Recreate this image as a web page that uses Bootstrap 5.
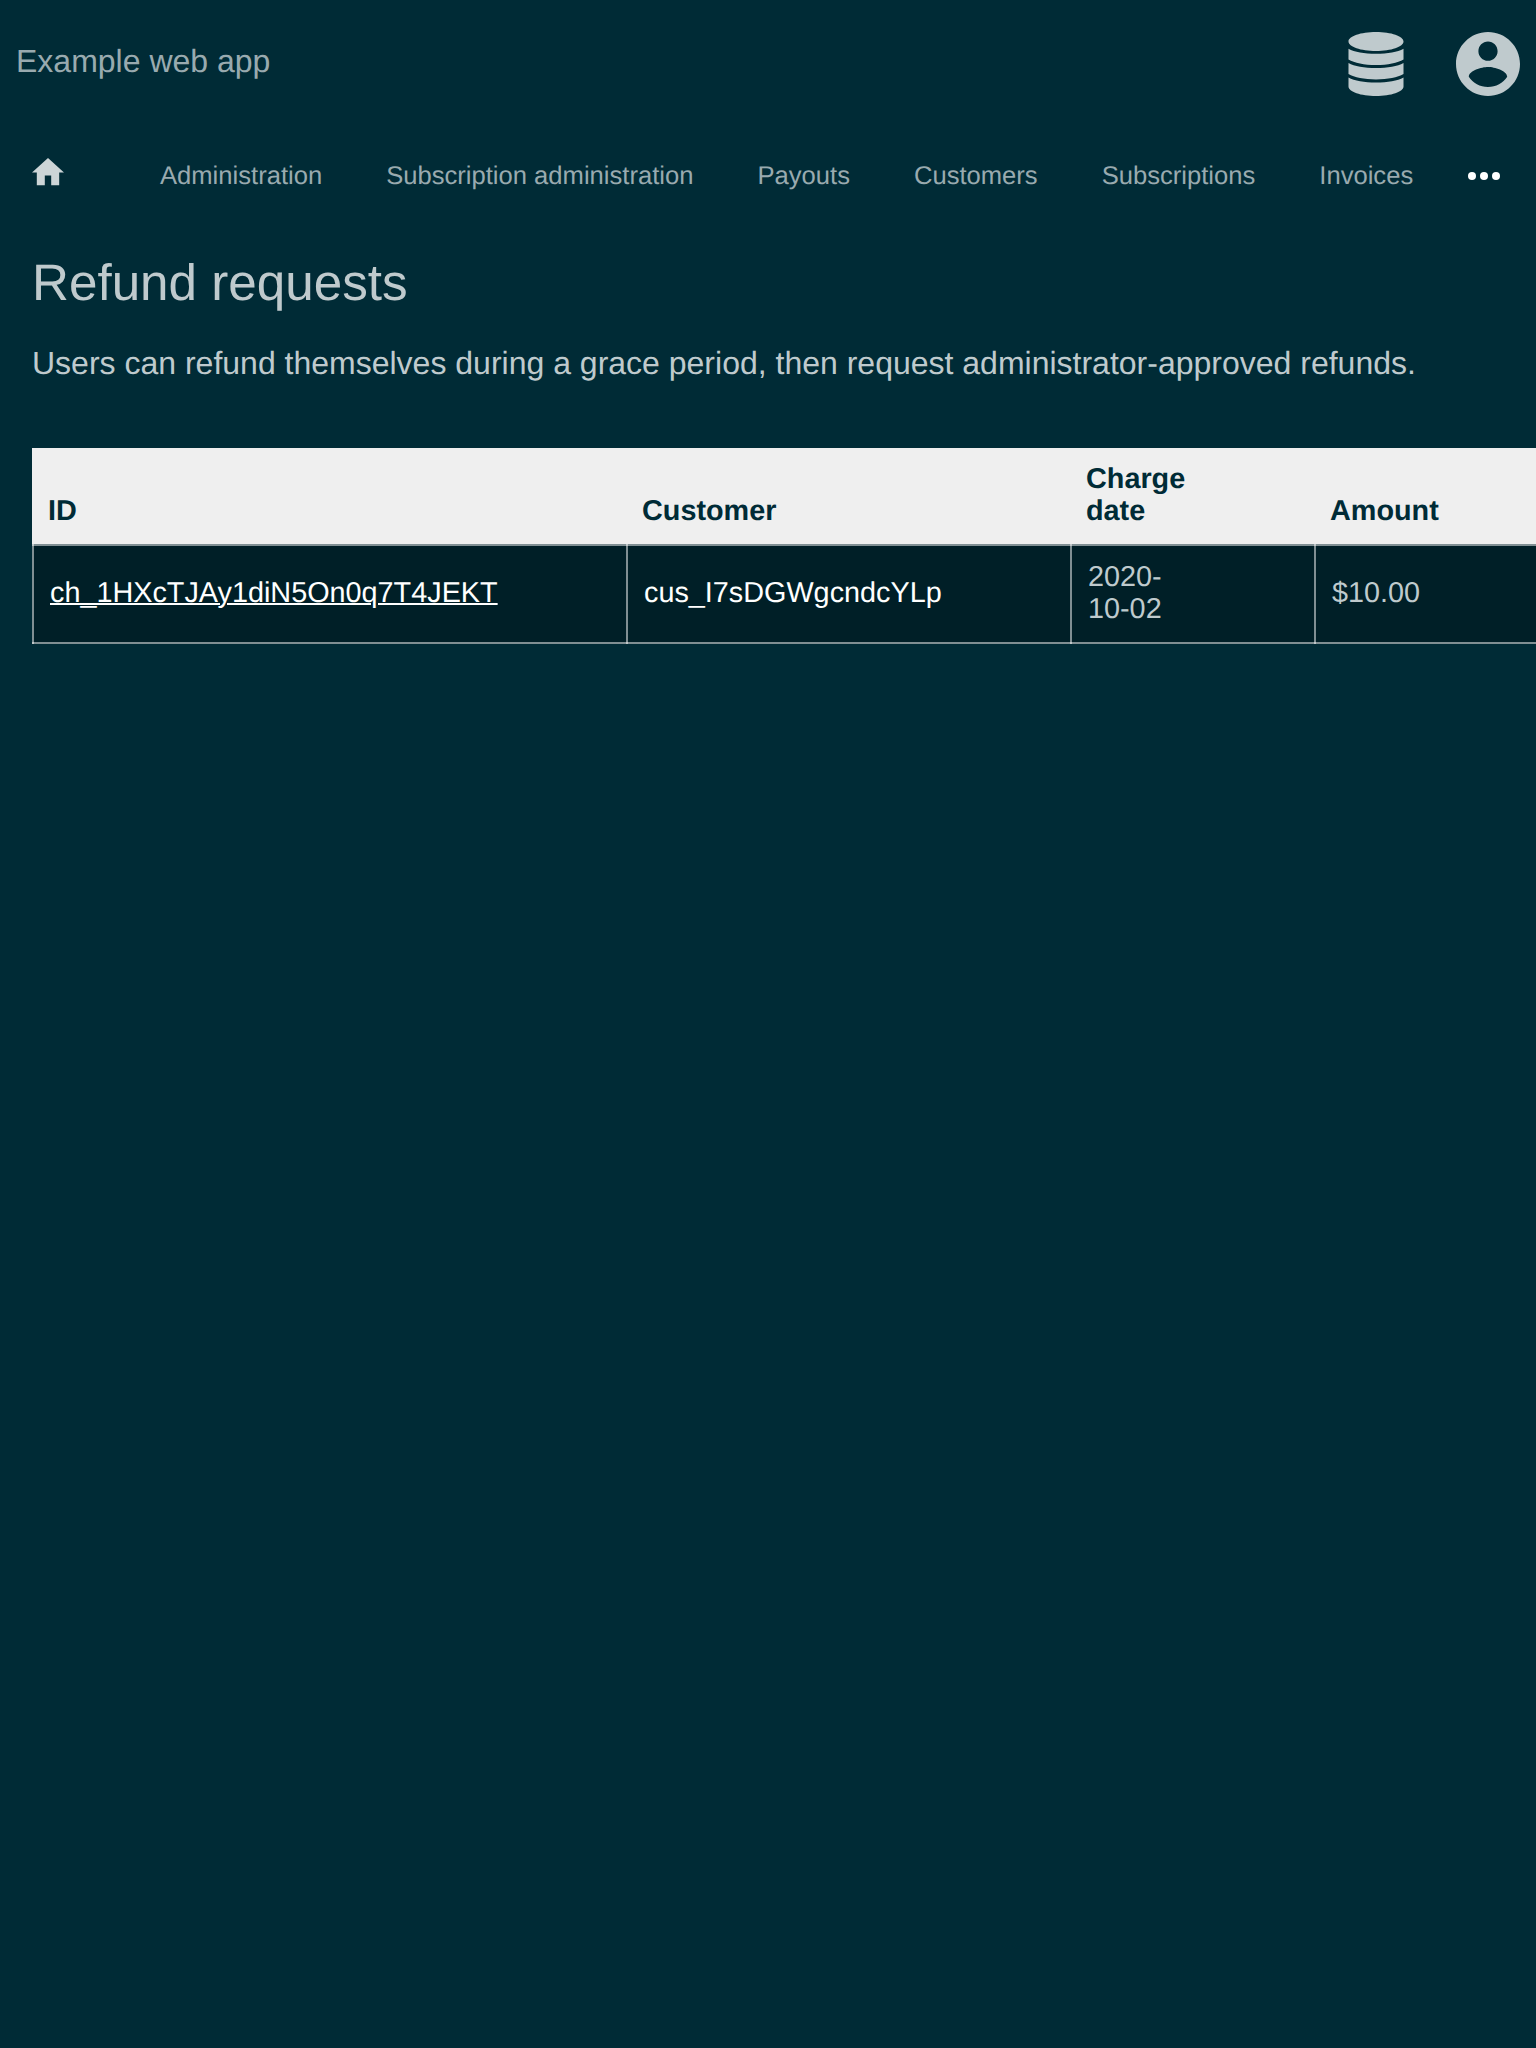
<!DOCTYPE html>
<html lang="en">
<head>
<meta charset="utf-8">
<title>Refund requests</title>
<link href="https://cdn.jsdelivr.net/npm/bootstrap@5.3.0/dist/css/bootstrap.min.css" rel="stylesheet">
<style>
body { background: #002b36; color: #bfcacd; font-family: "Liberation Sans", Arial, sans-serif; font-size: 32px; line-height: 36px; overflow: hidden; min-height: 100vh; text-rendering: geometricPrecision; }
.app-header { height: 128px; padding: 0 16px; }
.app-title { font-size: 32px; color: #99aaaf; margin: 43px 0 0; line-height: 36px; }
.header-icons { gap: 52px; padding-top: 32px; }
.app-nav { height: 96px; padding: 0 36px 0 32px; line-height: 30px; }
.home-link { width: 96px; flex: none; line-height: 0; margin-top: -8px; }
.app-nav .nav-link { color: #99aaaf; padding: 0 32px; white-space: nowrap; font-size: 25.6px; }
.page-body { padding: 30px 0 0 32px; }
.page-heading { font-size: 51.2px; line-height: 58px; font-weight: 400; margin: 0; }
.intro-text { margin: 33px 0 67px; white-space: nowrap; }
.refund-table { --rule: linear-gradient(rgba(255,255,255,.5), rgba(255,255,255,.5)); width: 100%; table-layout: fixed; border-collapse: separate; border-spacing: 0; font-size: 28.8px; line-height: 32px; }
.refund-table th { background: #efefef; color: #002b36; padding: 15px 16px 17px; vertical-align: bottom; text-align: left; }
.refund-table td { background: var(--rule) left / 2px 100% no-repeat, var(--rule) top / 100% 2px no-repeat, var(--rule) bottom / 100% 2px no-repeat, #001f27; padding: 17px 16px 19px 18px; vertical-align: middle; }
.refund-table .date-cell { padding-right: 122px; }
.refund-table a { color: #fff; text-decoration-thickness: 2px; }
.id-col { width: 594px; }
.customer-col { width: 444px; }
.date-col { width: 244px; }
</style>
</head>
<body>
<header class="app-header d-flex justify-content-between align-items-start">
  <h1 class="app-title fw-normal">Example web app</h1>
  <div class="header-icons d-flex">
    <svg width="56" height="64" viewBox="-0.500 0 57 64" preserveAspectRatio="none" fill="#bfcacd"><path d="M28 0C43.500 0 56 4.200 56 9.500S43.500 19 28 19 0 14.800 0 9.500 12.500 0 28 0zM0 16.700C6 20 16 21.700 28 21.700S50 20 56 16.700V27.500C50 31 40 33 28 33S6 31 0 27.500zM0 31C6 34.300 16 36 28 36S50 34.300 56 31V42C50 45.500 40 47.400 28 47.400S6 45.500 0 42zM0 45.500C6 48.800 16 50.600 28 50.600S50 48.800 56 45.500V54.500C56 59.800 43.500 64 28 64S0 59.800 0 54.500z"/></svg>
    <svg width="64" height="64" viewBox="2 2 20 20" fill="#bfcacd"><path d="M12 2C6.480 2 2 6.480 2 12s4.480 10 10 10 10-4.480 10-10S17.520 2 12 2zm0 3c1.660 0 3 1.340 3 3s-1.340 3-3 3-3-1.340-3-3 1.340-3 3-3zm0 14.200c-2.500 0-4.710-1.280-6-3.220.030-1.990 4-3.080 6-3.080 1.990 0 5.970 1.090 6 3.080-1.290 1.940-3.500 3.220-6 3.220z"/></svg>
  </div>
</header>
<nav class="app-nav d-flex align-items-center">
  <a class="home-link" href="#" aria-label="Home"><svg width="32" height="27.200" viewBox="2 3 20 17" fill="#ccd5d7"><path d="M10 20v-6h4v6h5v-8h3L12 3 2 12h3v8z"/></svg></a>
  <a class="nav-link" href="#">Administration</a>
  <a class="nav-link" href="#">Subscription administration</a>
  <a class="nav-link" href="#">Payouts</a>
  <a class="nav-link" href="#">Customers</a>
  <a class="nav-link" href="#">Subscriptions</a>
  <a class="nav-link" href="#">Invoices</a>
  <svg class="ms-auto flex-shrink-0" width="32" height="8" viewBox="0 0 32 8" fill="#fff"><circle cx="4" cy="4" r="4"/><circle cx="16" cy="4" r="4"/><circle cx="28" cy="4" r="4"/></svg>
</nav>
<main class="page-body">
  <h2 class="page-heading">Refund requests</h2>
  <p class="intro-text">Users can refund themselves during a grace period, then request administrator-approved refunds.</p>
  <table class="refund-table">
    <colgroup><col class="id-col"><col class="customer-col"><col class="date-col"><col></colgroup>
    <thead><tr><th>ID</th><th>Customer</th><th class="date-cell">Charge date</th><th>Amount</th></tr></thead>
    <tbody><tr><td><a href="#">ch_1HXcTJAy1diN5On0q7T4JEKT</a></td><td class="text-white">cus_I7sDGWgcndcYLp</td><td class="date-cell">2020-10-02</td><td>$10.00</td></tr></tbody>
  </table>
</main>
<script src="https://cdn.jsdelivr.net/npm/bootstrap@5.3.0/dist/js/bootstrap.bundle.min.js"></script>
</body>
</html>
